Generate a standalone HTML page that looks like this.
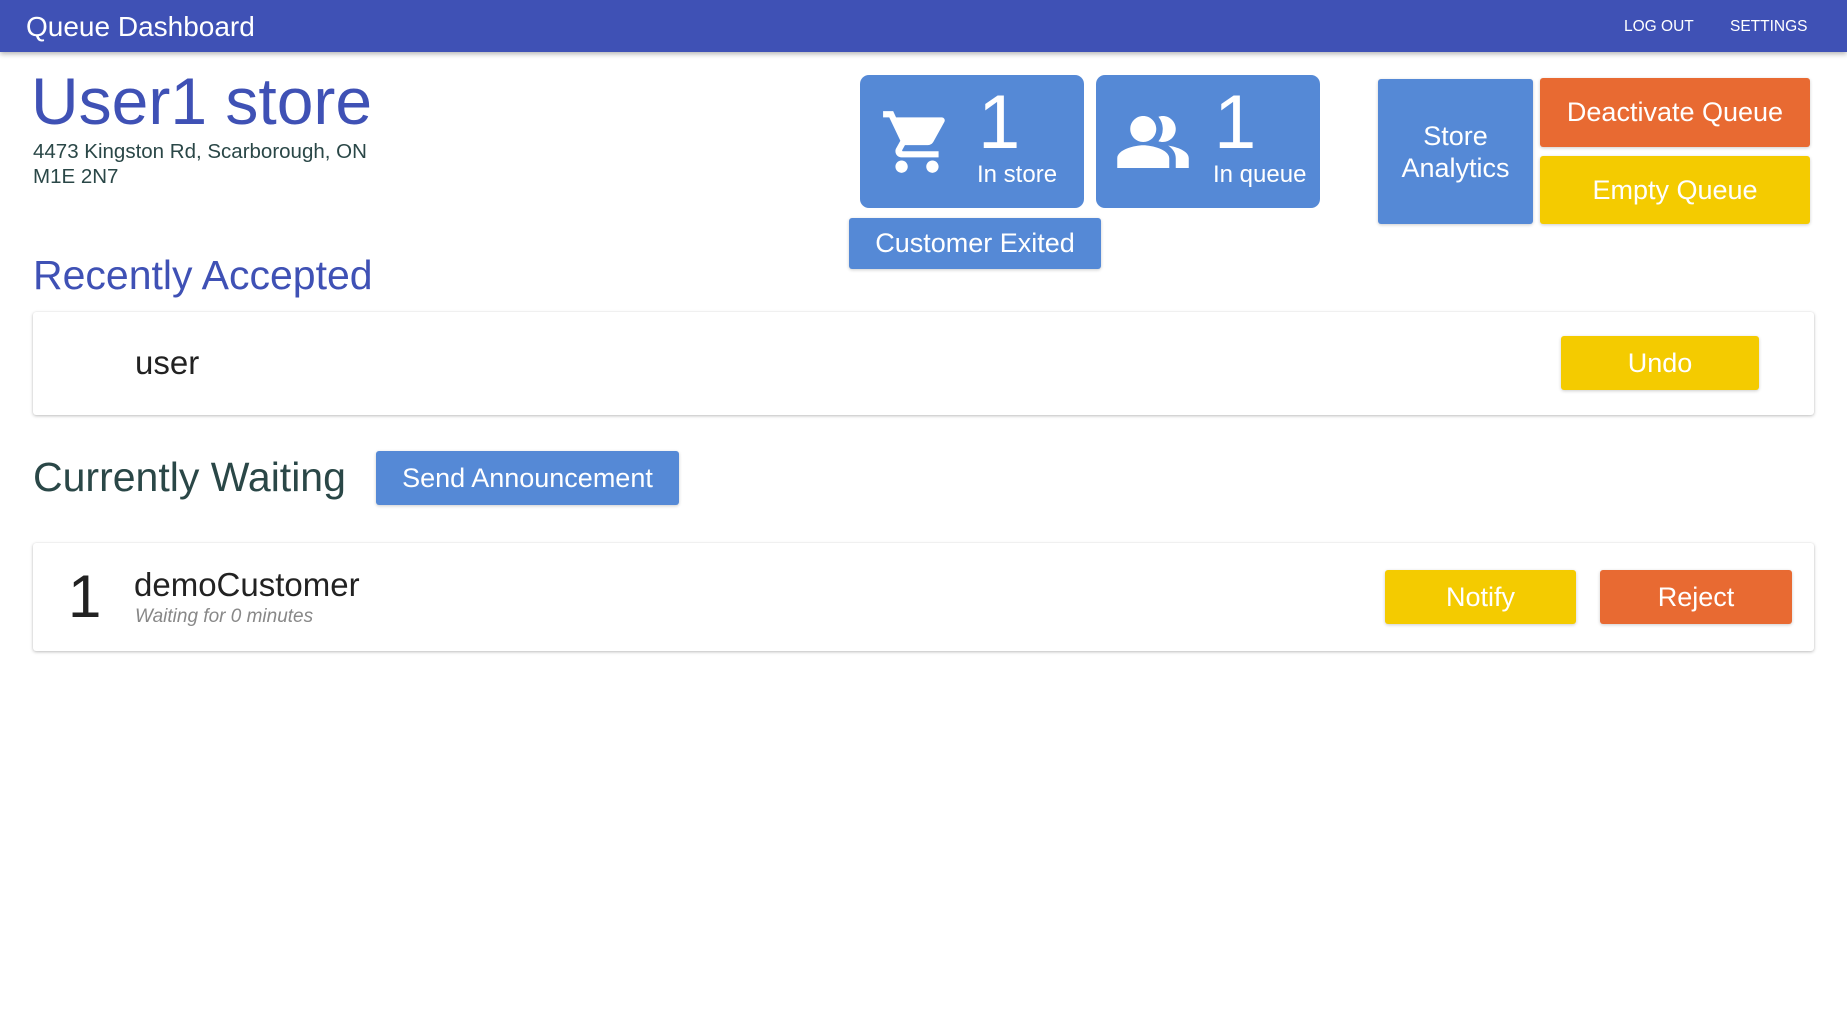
<!DOCTYPE html>
<html><head><meta charset="utf-8"><style>
*{margin:0;padding:0;box-sizing:border-box}
body{width:1847px;height:1031px;background:#fff;font-family:"Liberation Sans",Arial,sans-serif;position:relative;overflow:hidden}
.a{position:absolute}
.nav{left:0;top:0;width:1847px;height:52px;background:#3f51b5;box-shadow:0 2px 5px rgba(0,0,0,.3)}
.btn{position:absolute;display:flex;align-items:center;justify-content:center;color:#fff;border-radius:3px;text-align:center;box-shadow:0 1px 3px rgba(0,0,0,.2)}
.blue{background:#5589d6}.org{background:#e86a32}.yel{background:#f4cb00}
.card{position:absolute;left:33px;width:1781px;background:#fff;border-radius:3px;box-shadow:0 1px 3px rgba(0,0,0,.25),0 0 1px rgba(0,0,0,.1)}
.stat{position:absolute;top:75px;width:224px;height:133px;background:#5589d6;border-radius:9px;color:#fff}
</style></head><body>
<div class="a nav">
<div class="a" style="left:26px;top:11px;color:#fff;font-size:28px">Queue Dashboard</div>
<div class="a" style="left:1624px;top:18px;color:#fff;font-size:15.5px">LOG OUT</div>
<div class="a" style="left:1730px;top:18px;color:#fff;font-size:15.5px">SETTINGS</div>
</div>
<div class="a" style="left:31px;top:62px;font-size:66px;color:#3f51b5;line-height:78px">User1 store</div>
<div class="a" style="left:33px;top:139px;font-size:20.5px;color:#2a4747;line-height:25px">4473 Kingston Rd, Scarborough, ON<br>M1E 2N7</div>

<div class="stat" style="left:860px">
<svg class="a" style="left:20px;top:30px" width="74" height="74" viewBox="0 0 24 24"><path fill="#fff" d="M7 18c-1.1 0-2 .9-2 2s.9 2 2 2 2-.9 2-2-.9-2-2-2zM1 2v2h2l3.6 7.59-1.35 2.45c-.16.28-.25.61-.25.96 0 1.1.9 2 2 2h12v-2H7.42c-.14 0-.25-.11-.25-.25l.03-.12.9-1.63h7.45c.75 0 1.41-.41 1.75-1.03l3.58-6.49A1 1 0 0 0 20 4H5.21l-.94-2H1zm16 16c-1.1 0-2 .9-2 2s.9 2 2 2 2-.9 2-2-.9-2-2-2z"/></svg>
<div class="a" style="left:118px;top:8px;font-size:76px;line-height:80px">1</div>
<div class="a" style="left:117px;top:86px;font-size:24px">In store</div>
</div>
<div class="stat" style="left:1096px">
<svg class="a" style="left:18px;top:28px" width="78" height="78" viewBox="0 0 24 24"><path fill="#fff" d="M16.67 13.13C18.04 14.06 19 15.32 19 17v3h4v-3c0-2.18-3.57-3.47-6.33-3.87zM15 12c2.21 0 4-1.79 4-4s-1.79-4-4-4c-.47 0-.91.1-1.33.24a5.98 5.98 0 0 1 0 7.52c.42.14.86.24 1.33.24zM9 12c2.21 0 4-1.79 4-4s-1.79-4-4-4-4 1.79-4 4 1.79 4 4 4zm0 1c-2.67 0-8 1.34-8 4v3h16v-3c0-2.660-5.33-4-8-4z"/></svg>
<div class="a" style="left:118px;top:8px;font-size:76px;line-height:80px">1</div>
<div class="a" style="left:117px;top:86px;font-size:24px">In queue</div>
</div>
<div class="btn blue" style="left:849px;top:218px;width:252px;height:51px;font-size:27px">Customer Exited</div>
<div class="btn blue" style="left:1378px;top:79px;width:155px;height:145px;font-size:27px;line-height:32px">Store<br>Analytics</div>
<div class="btn org" style="left:1540px;top:78px;width:270px;height:69px;font-size:27px">Deactivate Queue</div>
<div class="btn yel" style="left:1540px;top:156px;width:270px;height:68px;font-size:27px">Empty Queue</div>

<div class="a" style="left:33px;top:252px;font-size:41px;color:#3f51b5">Recently Accepted</div>
<div class="card" style="top:312px;height:103px">
<div class="a" style="left:102px;top:32px;font-size:33px;color:#222">user</div>
<div class="btn yel" style="left:1528px;top:24px;width:198px;height:54px;font-size:27px">Undo</div>
</div>

<div class="a" style="left:33px;top:454px;font-size:41px;color:#2a4747">Currently Waiting</div>
<div class="btn blue" style="left:376px;top:451px;width:303px;height:54px;font-size:27px">Send Announcement</div>

<div class="card" style="top:543px;height:108px">
<div class="a" style="left:35px;top:20px;font-size:60px;color:#222;line-height:68px">1</div>
<div class="a" style="left:101px;top:23px;font-size:33px;color:#222">demoCustomer</div>
<div class="a" style="left:102px;top:63px;font-size:19px;color:#888;font-style:italic">Waiting for 0 minutes</div>
<div class="btn yel" style="left:1352px;top:27px;width:191px;height:54px;font-size:27px">Notify</div>
<div class="btn org" style="left:1567px;top:27px;width:192px;height:54px;font-size:27px">Reject</div>
</div>
</body></html>
